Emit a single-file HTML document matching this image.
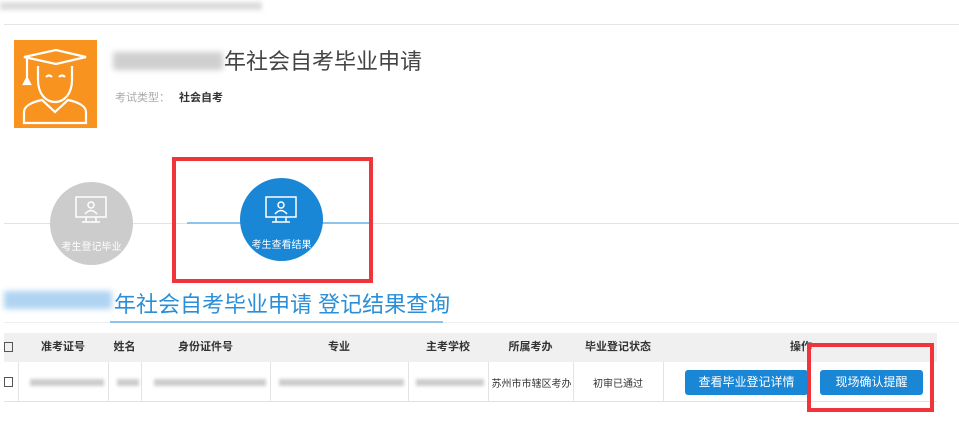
<!DOCTYPE html>
<html><head><meta charset="utf-8"><style>
*{margin:0;padding:0;box-sizing:border-box}
body{width:959px;height:432px;background:#fff;position:relative;overflow:hidden;font-family:"Liberation Sans","Noto Sans CJK SC",sans-serif}
.a{position:absolute}
.blur{background:#ccc;filter:blur(1.5px)}
.th{position:absolute;top:333px;height:29px;line-height:29px;font-size:11px;color:#333;text-align:center;font-weight:bold}
.vl{position:absolute;top:362px;width:1px;height:40px;background:#e3e3e3}
.btn{position:absolute;background:#1a86d6;color:#fff;font-size:12px;text-align:center;border-radius:3px;height:25px;line-height:25px}
</style></head><body>
<div class="a" style="left:0;top:2px;width:262px;height:8px;background:#ddd;filter:blur(2px)"></div>
<div class="a" style="left:4px;top:24px;width:955px;height:1px;background:#e5e5e5"></div>
<div class="a" style="left:14px;top:40px;width:83px;height:88px;background:#f7931e"></div>
<svg class="a" style="left:14px;top:40px" width="83" height="88" viewBox="0 0 83 88" fill="none" stroke="#fff" stroke-width="2.2">
<path d="M10 17 L42 10 L72 17 L42 24 Z"/><path d="M13 18 V43 M10 44 L13 38 L16 44 Z"/>
<path d="M24 26 V40 C24 54 32 62 41 62 C50 62 58 54 58 40 V26"/>
<path d="M32 37 q3 -3 6 0 M45 37 q3 -3 6 0"/>
<path d="M10 83 V72 C10 66 18 62 28 60 L41 72 L54 60 C64 62 72 66 72 72 V83 Z"/>
</svg>
<div class="a" style="left:113px;top:52px;width:110px;height:18px;background:#bbb;filter:blur(3px);opacity:.7"></div>
<div class="a" style="left:224px;top:44px;font-size:22px;color:#444">年社会自考毕业申请</div>
<div class="a" style="left:115px;top:89px;font-size:11px;color:#aaa">考试类型：</div>
<div class="a" style="left:179px;top:89px;font-size:11px;color:#333;font-weight:bold">社会自考</div>
<div class="a" style="left:4px;top:223px;width:955px;height:1px;background:#e2e2e2"></div>
<div class="a" style="left:187px;top:222px;width:183px;height:2px;background:#8cc4ea"></div>
<div class="a" style="left:50px;top:182px;width:83px;height:83px;border-radius:50%;background:#ccc"></div>
<div class="a" style="left:240px;top:178px;width:83px;height:83px;border-radius:50%;background:#1a86d6"></div>
<svg class="a" style="left:74px;top:195px" width="34" height="32" viewBox="0 0 34 32" fill="none" stroke="#fff" stroke-width="1.5"><rect x="2" y="2" width="30" height="20"/><circle cx="17" cy="10" r="3"/><path d="M11 19 q6 -7 12 0 M12 22 v5 M22 22 v5 M8 27 h18"/></svg>
<svg class="a" style="left:264px;top:195px" width="34" height="32" viewBox="0 0 34 32" fill="none" stroke="#fff" stroke-width="1.5"><rect x="2" y="2" width="30" height="20"/><circle cx="17" cy="10" r="3"/><path d="M11 19 q6 -7 12 0 M12 22 v5 M22 22 v5 M8 27 h18"/></svg>
<div class="a" style="left:50px;top:238px;width:83px;text-align:center;font-size:10px;color:#fff">考生登记毕业</div>
<div class="a" style="left:240px;top:236px;width:83px;text-align:center;font-size:10px;color:#fff">考生查看结果</div>
<div class="a" style="left:172px;top:157px;width:201px;height:126px;border:4px solid #f0353a"></div>
<div class="a" style="left:4px;top:291px;width:108px;height:18px;background:#9cc9ee;filter:blur(3px);opacity:.8"></div>
<div class="a" style="left:114px;top:287px;font-size:22px;color:#2a8fd8">年社会自考毕业申请 登记结果查询</div>
<div class="a" style="left:4px;top:322px;width:955px;height:1px;background:#eee"></div>
<div class="a" style="left:110px;top:321px;width:333px;height:2px;background:#8cc4ea"></div>
<div class="a" style="left:4px;top:333px;width:933px;height:29px;background:#f0f0f0"></div>
<div class="a" style="left:4px;top:401px;width:933px;height:1px;background:#e3e3e3"></div>
<div class="a" style="left:4px;top:342px;width:9px;height:10px;border:1px solid #555"></div>
<div class="a" style="left:4px;top:377px;width:9px;height:10px;border:1px solid #555"></div>
<div class="th" style="left:18px;width:90px">准考证号</div>
<div class="th" style="left:108px;width:33px">姓名</div>
<div class="th" style="left:141px;width:129px">身份证件号</div>
<div class="th" style="left:270px;width:138px">专业</div>
<div class="th" style="left:408px;width:80px">主考学校</div>
<div class="th" style="left:488px;width:85px">所属考办</div>
<div class="th" style="left:573px;width:90px">毕业登记状态</div>
<div class="th" style="left:781px;width:40px">操作</div>
<div class="vl" style="left:18px"></div><div class="vl" style="left:108px"></div><div class="vl" style="left:141px"></div><div class="vl" style="left:270px"></div><div class="vl" style="left:408px"></div><div class="vl" style="left:488px"></div><div class="vl" style="left:573px"></div><div class="vl" style="left:663px"></div>
<div class="a blur" style="left:30px;top:379px;width:74px;height:7px"></div>
<div class="a blur" style="left:117px;top:379px;width:22px;height:7px"></div>
<div class="a blur" style="left:154px;top:379px;width:112px;height:7px"></div>
<div class="a blur" style="left:279px;top:379px;width:125px;height:7px"></div>
<div class="a blur" style="left:416px;top:379px;width:68px;height:7px"></div>
<div class="a" style="left:490px;top:375px;width:83px;font-size:10px;color:#333;text-align:center">苏州市市辖区考办</div>
<div class="a" style="left:573px;top:375px;width:90px;font-size:10px;color:#333;text-align:center">初审已通过</div>
<div class="btn" style="left:685px;top:370px;width:123px">查看毕业登记详情</div>
<div class="btn" style="left:820px;top:370px;width:103px">现场确认提醒</div>
<div class="a" style="left:807px;top:343px;width:127px;height:69px;border:4px solid #f0353a"></div>
</body></html>
